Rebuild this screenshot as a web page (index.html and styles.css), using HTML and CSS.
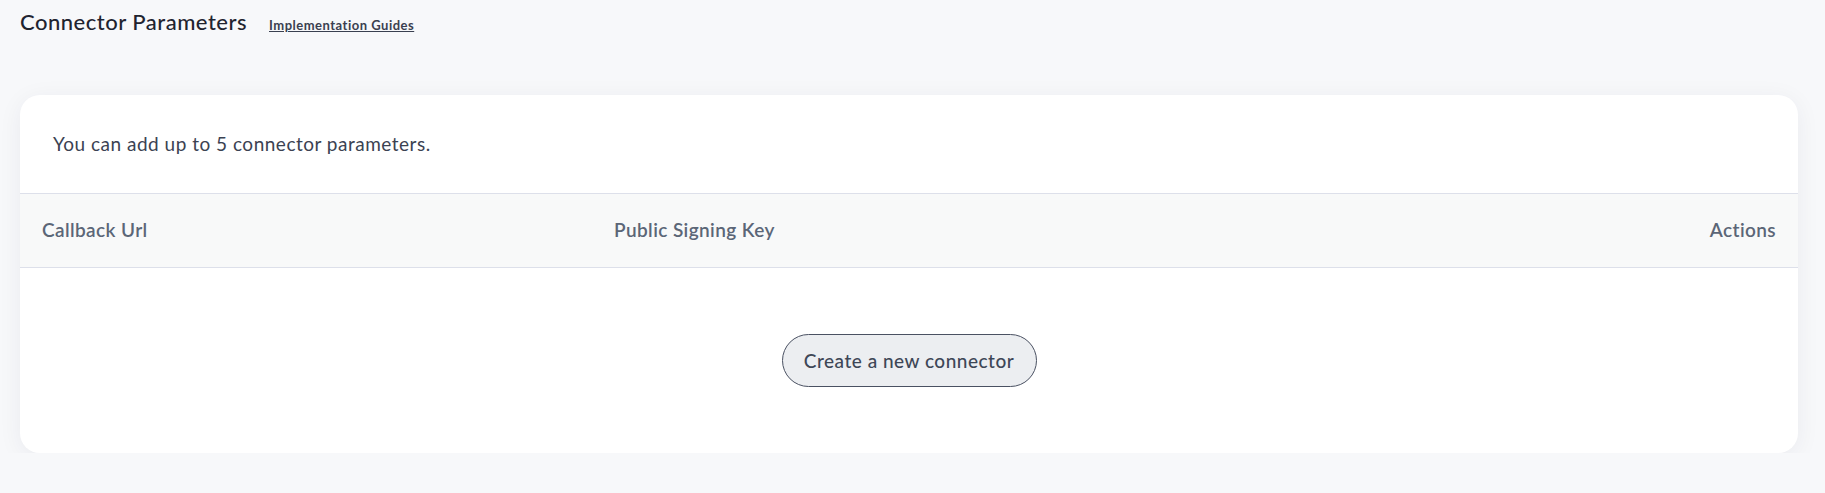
FILE: index.html
```html
<!DOCTYPE html>
<html lang="en">
<head>
  <meta charset="UTF-8">
  <meta name="viewport" content="width=device-width, initial-scale=1.0">
  <title>Connector Parameters</title>
  <link rel="stylesheet" href="styles.css">
</head>
<body>

<div class="page">
  <div class="page-header">
    <h1 class="page-title">Connector Parameters</h1>
    <a class="guide-link" href="#">Implementation Guides</a>
  </div>

  <div class="card">
    <p class="card-intro">You can add up to 5 connector parameters.</p>
    <table class="connector-table">
      <thead>
        <tr>
          <th class="col-url">Callback Url</th>
          <th class="col-key">Public Signing Key</th>
          <th class="col-actions">Actions</th>
        </tr>
      </thead>
      <tbody>
        <tr>
          <td class="empty-cell" colspan="3">
            <button class="create-button">Create a new connector</button>
          </td>
        </tr>
      </tbody>
    </table>
  </div>
</div>

</body>
</html>
```

FILE: styles.css
```css
body {
  margin: 0;
  background: #f7f8fa;
  color: #2b3140;
  font-family: Lato, 'Noto Sans', sans-serif;
}
.page {
  padding: 0 27px 0 20px;
}
.page-header {
  display: flex;
  align-items: baseline;
  gap: 22px;
  height: 95px;
  padding-top: 8px;
  box-sizing: border-box;
}
.page-title {
  margin: 0;
  font-size: 22px;
  font-weight: 500;
  letter-spacing: 0.5px;
  color: #1f2430;
}
.guide-link {
  font-size: 13px;
  font-weight: 700;
  letter-spacing: 0.5px;
  color: #3a4050;
  text-decoration: underline;
}
.card {
  background: #ffffff;
  border-radius: 20px;
  box-shadow: 0 4px 24px rgba(30, 40, 70, 0.06);
  overflow: hidden;
}
.card-intro {
  margin: 0;
  padding: 36px 33px;
  font-size: 19px;
  line-height: 26px;
  letter-spacing: 0.5px;
  color: #3b4252;
}
.connector-table {
  width: 100%;
  border-collapse: collapse;
}
.connector-table th {
  background: #f8f9f9;
  border-top: 1px solid #dde0ea;
  border-bottom: 1px solid #dde0ea;
  height: 70px;
  padding: 0 22px 3px;
  font-size: 19px;
  font-weight: 600;
  letter-spacing: 0.4px;
  color: #5b6677;
  text-align: left;
}
.col-url {
  width: 528px;
}
.connector-table th.col-actions {
  text-align: right;
}
.empty-cell {
  height: 183px;
  text-align: center;
  vertical-align: middle;
}
.create-button {
  width: 255px;
  height: 53px;
  border: 1px solid #4a5162;
  border-radius: 27px;
  background: #eceef1;
  font-family: inherit;
  font-size: 19px;
  font-weight: 500;
  letter-spacing: 0.5px;
  color: #3e4757;
  cursor: pointer;
}
```
